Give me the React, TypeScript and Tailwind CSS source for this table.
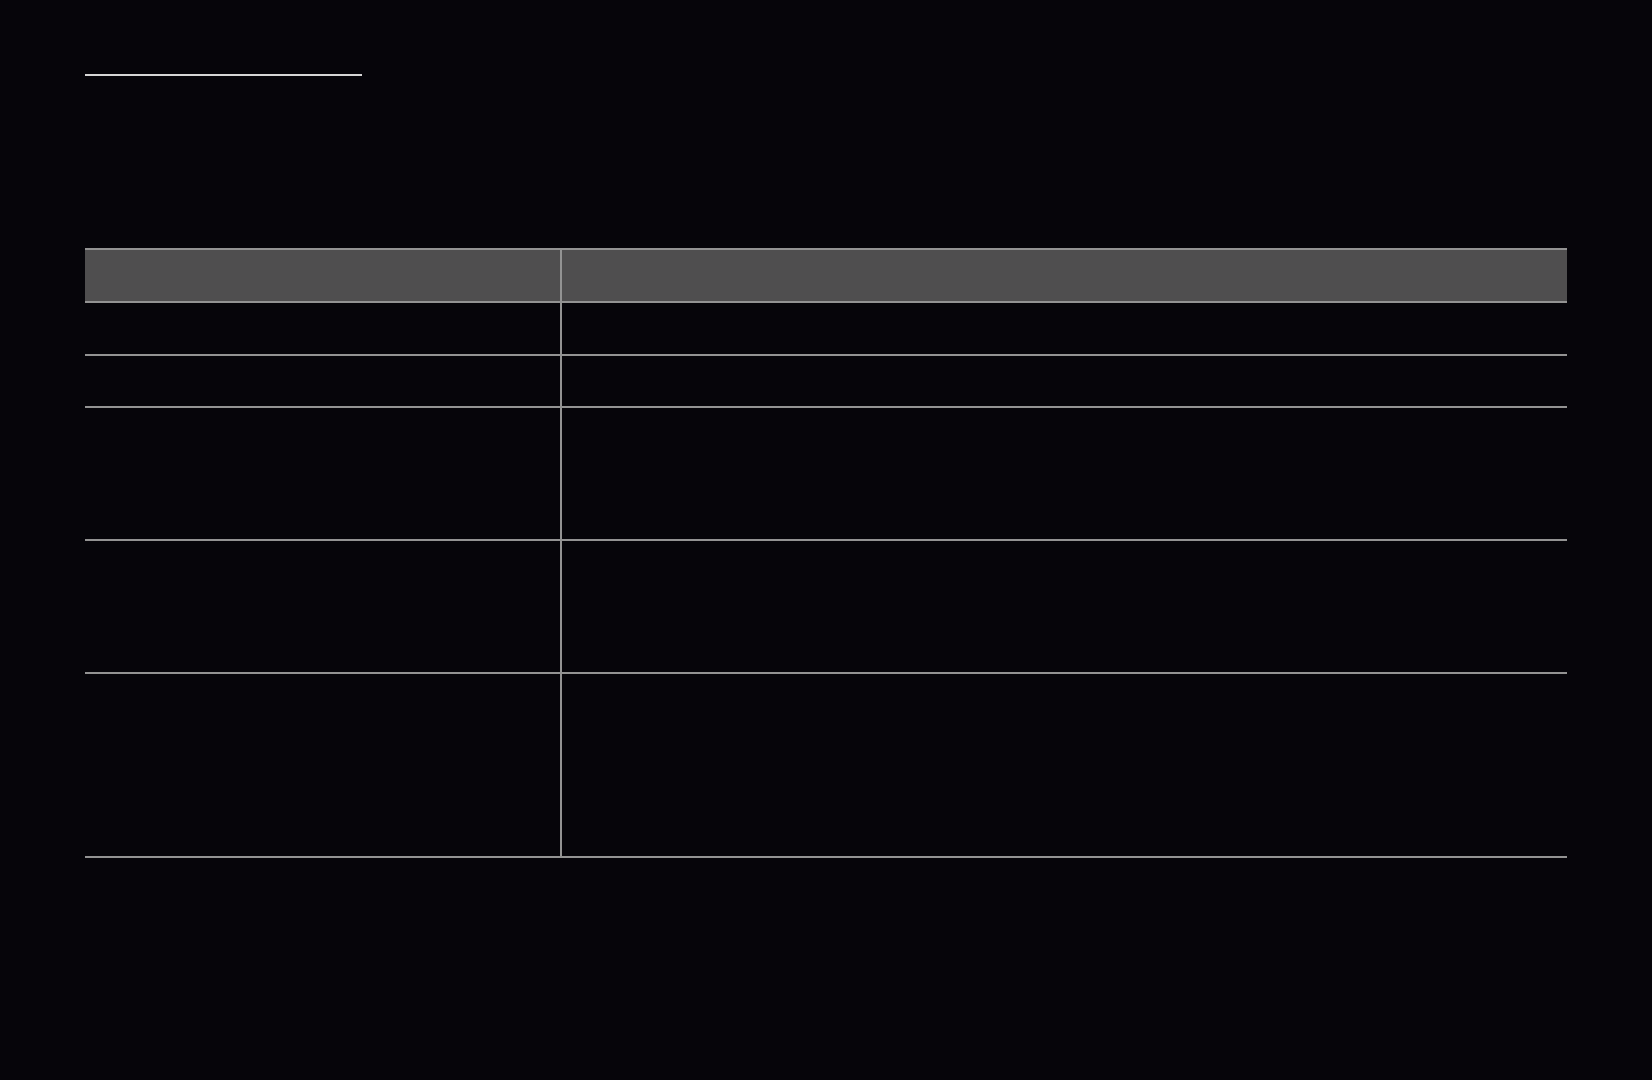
import React from "react";

const rows = [
  { h: "h-[53px]", header: false },
  { h: "h-[52px]", header: false },
  { h: "h-[133px]", header: false },
  { h: "h-[133px]", header: false },
  { h: "h-[184px]", header: false },
];

export default function App() {
  return (
    <div className="min-h-[1080px] w-full bg-[#06050a] pl-[85px] pt-[74px]" style={{ fontFamily: '"Liberation Sans", Arial, sans-serif' }}>
      <div className="h-[2px] w-[277px] bg-[#d6d6d6]" />
      <div className="mt-[172px] w-[1482px] border-b-2 border-[#939393]">
        <div className="flex h-[53px] border-t-2 border-[#939393] bg-[#4f4e4f]">
          <div className="w-[477px] border-r-2 border-[#939393]" />
          <div className="flex-1" />
        </div>
        {rows.map((r, i) => (
          <div key={i} className={`flex ${r.h} border-t-2 border-[#939393]`}>
            <div className="w-[477px] border-r-2 border-[#939393]" />
            <div className="flex-1" />
          </div>
        ))}
      </div>
    </div>
  );
}
